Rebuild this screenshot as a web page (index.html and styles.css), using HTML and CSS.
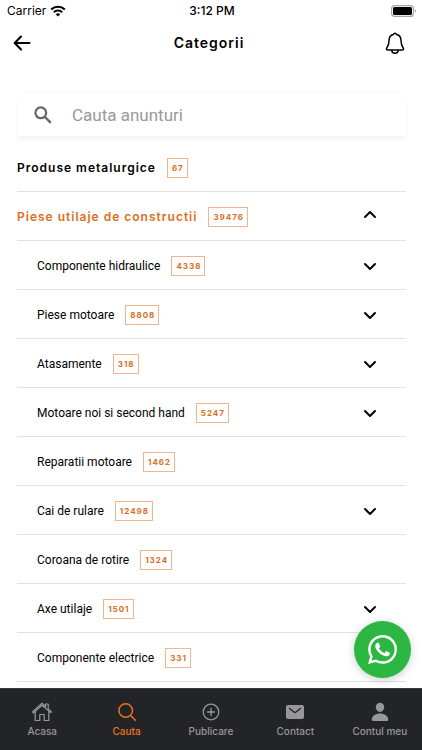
FILE: index.html
```html
<!DOCTYPE html>
<html lang="ro">
<head>
<meta charset="utf-8">
<meta name="viewport" content="width=device-width, initial-scale=1">
<title>Categorii</title>
<link rel="stylesheet" href="styles.css">
</head>
<body>
<svg class="defs" aria-hidden="true">
  <symbol id="down" viewBox="0 0 14 13"><path d="M2 5l5 5 5-5" fill="none" stroke="currentColor" stroke-width="2" stroke-linecap="round" stroke-linejoin="round"/></symbol>
  <symbol id="up" viewBox="0 0 14 13"><path d="M2 7l5-5 5 5" fill="none" stroke="currentColor" stroke-width="2" stroke-linecap="round" stroke-linejoin="round"/></symbol>
</svg>
<div class="status">
  <span class="carrier">Carrier
    <svg width="16" height="12" viewBox="0 0 16 12"><path d="M1.2 4.5a9.8 9.8 0 0 1 13.6 0" fill="none" stroke="#000" stroke-width="2.2"/><path d="M3.8 7.3a6 6 0 0 1 8.4 0" fill="none" stroke="#000" stroke-width="2"/><path d="M5.7 9.3a3.4 3.4 0 0 1 4.6 0L8 11.6z"/></svg>
  </span>
  <span class="time">3:12 PM</span>
  <svg class="battery" width="26" height="12" viewBox="0 0 26 12"><rect x=".6" y=".6" width="21.8" height="10.8" rx="3" fill="#fff" stroke="#a5a5a5" stroke-width="1.2"/><rect x="2" y="2" width="19" height="8" rx="1.6"/><path d="M23.8 4.2q1.4.5 1.4 1.8t-1.4 1.8z" fill="#a5a5a5"/></svg>
</div>
<header class="header">
  <button class="icon-button" aria-label="Inapoi"><svg width="18" height="16" viewBox="0 0 18 16"><path d="M8 1.5L1.7 8 8 14.5M2 8h14.5" fill="none" stroke="#000" stroke-width="2.1" stroke-linecap="round" stroke-linejoin="round"/></svg></button>
  <h1 class="title">Categorii</h1>
  <button class="icon-button icon-end" aria-label="Notificari"><svg width="20" height="22" viewBox="0 0 20 22"><path d="M10 1.2C9 1.2 8.6 1.9 8.3 2.6 5.4 3.3 4 5.5 4 8.5c0 4.5-.9 5.7-2.1 7.2-.9 1.1-.5 2.3 1 2.3h14.2c1.5 0 1.9-1.2 1-2.3C16.9 14.2 16 13 16 8.5c0-3-1.4-5.2-4.3-5.9C11.4 1.9 11 1.2 10 1.2z" fill="none" stroke="#000" stroke-width="1.5" stroke-linejoin="round"/><path d="M6.8 18.3a3.2 3 0 0 0 6.4 0" fill="none" stroke="#000" stroke-width="1.5"/></svg></button>
</header>
<main class="main">
  <label class="search">
    <svg width="18" height="18" viewBox="0 0 18 18"><circle cx="6.8" cy="6.8" r="5.4" fill="none" stroke="#666" stroke-width="2.2"/><path d="M11 11l5.8 5.8" stroke="#666" stroke-width="2.4"/></svg>
    <input type="search" placeholder="Cauta anunturi" aria-label="Cauta anunturi">
  </label>
  <ul class="list">
    <li><button class="row top"><span>Produse metalurgice</span><span class="count">67</span></button></li>
    <li><button class="row top open" aria-expanded="true"><span>Piese utilaje de constructii</span><span class="count">39476</span><svg class="chevron"><use href="#up"/></svg></button></li>
    <li><button class="row sub"><span>Componente hidraulice</span><span class="count">4338</span><svg class="chevron"><use href="#down"/></svg></button></li>
    <li><button class="row sub"><span>Piese motoare</span><span class="count">8808</span><svg class="chevron"><use href="#down"/></svg></button></li>
    <li><button class="row sub"><span>Atasamente</span><span class="count">318</span><svg class="chevron"><use href="#down"/></svg></button></li>
    <li><button class="row sub"><span>Motoare noi si second hand</span><span class="count">5247</span><svg class="chevron"><use href="#down"/></svg></button></li>
    <li><button class="row sub"><span>Reparatii motoare</span><span class="count">1462</span></button></li>
    <li><button class="row sub"><span>Cai de rulare</span><span class="count">12498</span><svg class="chevron"><use href="#down"/></svg></button></li>
    <li><button class="row sub"><span>Coroana de rotire</span><span class="count">1324</span></button></li>
    <li><button class="row sub"><span>Axe utilaje</span><span class="count">1501</span><svg class="chevron"><use href="#down"/></svg></button></li>
    <li><button class="row sub"><span>Componente electrice</span><span class="count">331</span></button></li>
  </ul>
</main>
<a class="whatsapp" href="#" aria-label="WhatsApp"><svg width="29" height="29" viewBox="0 0 24 24" fill="#fff"><path d="M17.472 14.382c-.297-.149-1.758-.867-2.030-.967-.273-.099-.471-.148-.670.150-.197.297-.767.966-.940 1.164-.173.199-.347.223-.644.075-.297-.150-1.255-.463-2.390-1.475-.883-.788-1.480-1.761-1.653-2.059-.173-.297-.018-.458.130-.606.134-.133.298-.347.446-.520.149-.174.198-.298.298-.497.099-.198.050-.371-.025-.520-.075-.149-.669-1.612-.916-2.207-.242-.579-.487-.500-.669-.510-.173-.008-.371-.010-.570-.010-.198 0-.520.074-.792.372-.272.297-1.040 1.016-1.040 2.479 0 1.462 1.065 2.875 1.213 3.074.149.198 2.096 3.200 5.077 4.487.709.306 1.262.489 1.694.625.712.227 1.360.195 1.871.118.571-.085 1.758-.719 2.006-1.413.248-.694.248-1.289.173-1.413-.074-.124-.272-.198-.570-.347m-5.421 7.403h-.004a9.870 9.870 0 0 1-5.031-1.378l-.361-.214-3.741.982.998-3.648-.235-.374a9.860 9.860 0 0 1-1.510-5.260c.001-5.450 4.436-9.884 9.888-9.884 2.640 0 5.122 1.030 6.988 2.898a9.825 9.825 0 0 1 2.893 6.994c-.003 5.450-4.437 9.884-9.885 9.884m8.413-18.297A11.815 11.815 0 0 0 12.050 0C5.495 0 .160 5.335.157 11.892c0 2.096.547 4.142 1.588 5.945L.057 24l6.305-1.654a11.882 11.882 0 0 0 5.683 1.448h.005c6.554 0 11.890-5.335 11.893-11.893a11.821 11.821 0 0 0-3.480-8.413z"/></svg></a>
<nav class="tabs">
  <a class="tab" href="#"><svg width="20" height="20" viewBox="0 0 20 20" fill="none" stroke="currentColor" stroke-width="1.2" stroke-linejoin="round"><path d="M3.2 9.5v9h4.6v-6h4.4v6h4.6v-9M1 10.300L.7 9.600 10 1.300l3.600 3.200V2h2.600v4.900l3.100 2.700-.6 1L10 3.300 1.200 11z"/></svg><span>Acasa</span></a>
  <a class="tab active" href="#" aria-current="page"><svg width="20" height="20" viewBox="0 0 20 20" fill="none" stroke="currentColor" stroke-width="1.5" stroke-linecap="round"><circle cx="8.7" cy="8.5" r="6.8"/><path d="M13.6 13.5l4.8 4.8"/></svg><span>Cauta</span></a>
  <a class="tab" href="#"><svg width="20" height="20" viewBox="0 0 20 20" fill="none" stroke="currentColor" stroke-width="1.3" stroke-linecap="round"><circle cx="10" cy="10" r="7.8"/><path d="M10 6.5v7M6.5 10h7"/></svg><span>Publicare</span></a>
  <a class="tab" href="#"><svg width="20" height="20" viewBox="0 0 20 20"><rect x="1" y="3" width="18" height="14" rx="2" fill="currentColor"/><path d="M4.500 6.500l5.500 4.200 5.500-4.200" fill="none" stroke="#232428" stroke-width="1.3" stroke-linecap="round" stroke-linejoin="round"/></svg><span>Contact</span></a>
  <a class="tab" href="#"><svg width="20" height="20" viewBox="0 0 20 20" fill="currentColor"><ellipse cx="10" cy="5.3" rx="4.2" ry="4.6"/><path d="M1.800 17.500c0-4 4-6.100 8.200-6.100s8.200 2.100 8.200 6.100q0 1.500-1.500 1.500H3.300q-1.500 0-1.500-1.500z"/></svg><span>Contul meu</span></a>
</nav>
</body>
</html>
```

FILE: styles.css
```css
* { box-sizing: border-box; }

body {
  margin: 0;
  height: 100vh;
  display: flex;
  flex-direction: column;
  overflow: hidden;
  background: #fff;
  color: #000;
  font-family: Roboto, "Liberation Sans", sans-serif;
}

svg { display: block; flex: none; }

button {
  margin: 0;
  padding: 0;
  border: 0;
  background: none;
  color: inherit;
  font: inherit;
  text-align: left;
}

.defs { width: 0; height: 0; position: absolute; }

.status, .header {
  flex: none;
  display: grid;
  grid-template-columns: 1fr auto 1fr;
  align-items: center;
}

.status {
  height: 21px;
  padding: 0 5px 0 7px;
  font: 12px Inter, sans-serif;
}

.carrier { display: flex; align-items: center; gap: 4px; }
.time { font-weight: 500; }
.battery { justify-self: end; }

.header { height: 43px; padding: 0 17px 0 13px; }

.title {
  margin: 0;
  font: 600 14px Inter, sans-serif;
  letter-spacing: 1px;
}

.icon-end { justify-self: end; }

.main {
  flex: 1;
  min-height: 0;
  overflow: hidden;
  padding: 29px 16px 0 17px;
}

.search {
  display: flex;
  align-items: center;
  gap: 20px;
  height: 43px;
  padding: 0 17px;
  background: #fff;
  box-shadow: 0 4px 5px -1px rgba(0, 0, 0, 0.06), 0 -3px 4px -1px rgba(0, 0, 0, 0.01);
}

.search input {
  flex: 1;
  min-width: 0;
  padding: 0;
  border: 0;
  outline: 0;
  background: none;
  font: 17px Roboto, sans-serif;
}

.search input::placeholder { color: #999; opacity: 1; }

.list { list-style: none; margin: 7px 0 0; padding: 0; }

.row {
  display: flex;
  align-items: center;
  gap: 11px;
  width: 100%;
  height: 49px;
  padding: 1px 29px 0 0;
  border-bottom: 1px solid #e2e2e2;
  font-size: 12px;
}

.top { font-family: Inter, sans-serif; font-weight: 600; letter-spacing: 1px; }
.open { color: #dc6d21; }
.sub { padding-left: 20px; }

.count {
  padding: 0 3px 0 4px;
  border: 1px solid #f3b58e;
  color: #dc6d21;
  font: 700 8px/18px Inter, sans-serif;
  letter-spacing: 1px;
}

.chevron { width: 14px; height: 13px; margin-left: auto; color: #000; }

.whatsapp {
  position: fixed;
  right: 11px;
  bottom: 72px;
  width: 57px;
  height: 57px;
  display: grid;
  place-items: center;
  border-radius: 50%;
  background: #2cb742;
  box-shadow: 0 2px 8px rgba(0, 0, 0, 0.2);
}

.tabs {
  flex: none;
  display: grid;
  grid-template-columns: repeat(5, 1fr);
  height: 62px;
  border-top: 1px solid #3a3b3f;
  background: #232428;
}

.tab {
  display: flex;
  flex-direction: column;
  align-items: center;
  gap: 2px;
  padding-top: 13px;
  color: #97979b;
  font: 500 10px/14px Inter, sans-serif;
  text-decoration: none;
  white-space: nowrap;
}

.active { color: #e8741c; }
```
